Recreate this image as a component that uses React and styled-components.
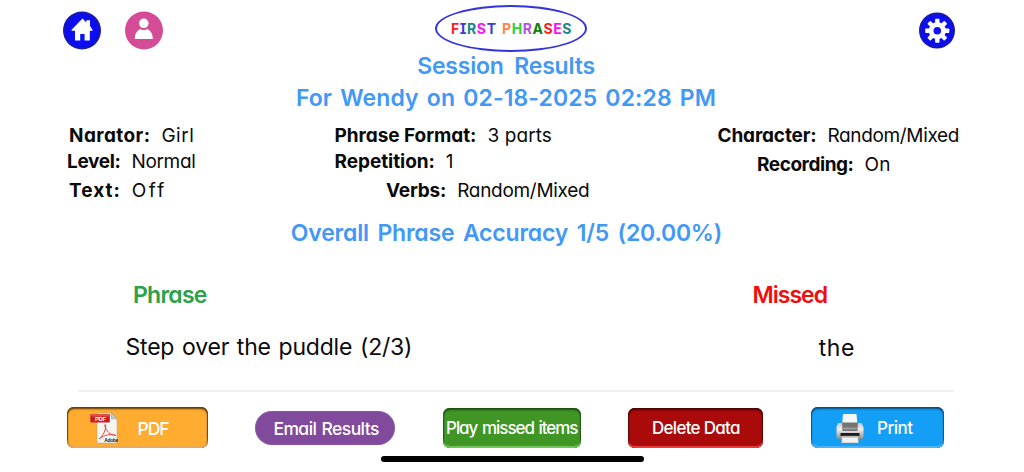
import React from 'react';
import styled, { createGlobalStyle } from 'styled-components';

const GlobalStyle = createGlobalStyle`
	* {
		box-sizing: border-box;
	}
	body {
		margin: 0;
		background: #fff;
		overflow: hidden;
	}
`;

const Page = styled.div`
	width: 1024px;
	height: 472px;
	display: flex;
	flex-direction: column;
	font-family: 'Comic Sans MS', Inter, 'Open Sans', sans-serif;
	font-feature-settings: 'cv11';
	color: #0a0a0a;
	white-space: nowrap;
`;

const Header = styled.header`
	display: grid;
	grid-template-columns: 372px 1fr 372px;
	height: 52px;
`;
const HeaderLeft = styled.div`
	display: flex;
	gap: 23px;
	padding: 11px 0 0 62.5px;
`;
const HeaderCenter = styled.div`
	display: flex;
	justify-content: center;
	padding: 4.5px 3px 0 0;
`;
const HeaderRight = styled.div`
	display: flex;
	justify-content: flex-end;
	padding: 12px 69px 0 0;
`;
const RoundButton = styled.button`
	width: ${(p) => p.$size}px;
	height: ${(p) => p.$size}px;
	padding: 0;
	border: 0;
	background: transparent;

	svg {
		display: block;
	}
`;
const Logo = styled.div`
	display: flex;
	align-items: center;
	justify-content: center;
	width: 152px;
	height: 47px;
	padding-left: 2px;
	border: 2px solid #3434dc;
	border-radius: 50%;
	font-size: 14px;
	font-weight: 700;
	letter-spacing: 0.6px;
	word-spacing: 1.5px;
	font-feature-settings: 'cv11', 'cv08';
`;
const Letter = styled.span`
	color: ${(p) => p.$color};
`;

const Title = styled.h1`
	margin: 0;
	height: ${(p) => p.$height}px;
	line-height: ${(p) => p.$line || p.$height}px;
	padding-right: ${(p) => p.$shift || 0}px;
	text-align: center;
	font-size: 23px;
	font-weight: 600;
	letter-spacing: ${(p) => p.$ls}px;
	word-spacing: ${(p) => p.$ws}px;
	color: #4298f6;
`;

const Settings = styled.section`
	display: grid;
	grid-template-columns: 267px 382px 1fr;
	height: 91px;
	padding: 7px 0 0 67px;
`;
const Column = styled.div`
	display: flex;
	flex-direction: column;
`;
const Setting = styled.div`
	display: flex;
	height: ${(p) => p.$height}px;
	line-height: ${(p) => p.$height}px;
	padding-left: ${(p) => p.$indent || 0}px;
	gap: 11px;
	font-size: 19px;
`;
const Name = styled.span`
	font-weight: 700;
	letter-spacing: ${(p) => p.$ls || 0}px;
`;
const Value = styled.span`
	letter-spacing: ${(p) => p.$ls || 0}px;
`;

const Results = styled.section`
	display: flex;
	flex-direction: column;
	height: 132px;
	margin: 0 70px 0 78px;
	border-bottom: 2px solid #efefef;
	font-size: 23px;
`;
const ResultHead = styled.div`
	display: flex;
	justify-content: space-between;
	height: 69px;
	line-height: 71px;
	padding: 0 127px 0 55px;
	font-weight: 600;
`;
const ResultRow = styled.div`
	display: flex;
	justify-content: space-between;
	height: 36px;
	line-height: 36px;
	padding: 0 99px 0 47.5px;
`;
const HeadCell = styled.span`
	color: ${(p) => p.$color};
	letter-spacing: ${(p) => p.$ls}px;
`;
const Cell = styled.span`
	letter-spacing: ${(p) => p.$ls}px;
	word-spacing: 1.5px;
	padding-top: ${(p) => p.$drop || 0}px;
`;

const Actions = styled.footer`
	display: flex;
	justify-content: space-between;
	align-items: center;
	height: 64px;
	padding: 7px 80px 0 66.5px;
`;
const Action = styled.button`
	display: flex;
	align-items: center;
	justify-content: ${(p) => (p.$icon ? 'flex-start' : 'center')};
	gap: ${(p) => p.$gap || 0}px;
	width: ${(p) => p.$width}px;
	height: ${(p) => p.$height || 40}px;
	margin: 0;
	padding: 1px 0 0 ${(p) => p.$pad || 0}px;
	border: 0;
	border-radius: ${(p) => p.$radius || 7}px;
	background: ${(p) => p.$color};
	box-shadow: ${(p) => (p.$flat ? 'inset 0 0 2px #a274b8' : `inset 0 -2px 1px ${p.$light}, inset 0 2px 2px ${p.$dark}, inset 1px 0 1px ${p.$dark}, inset -1px 0 1px ${p.$dark}`)};
	color: #fff;
	font-family: inherit;
	font-feature-settings: inherit;
	font-size: ${(p) => p.$font || 17.5}px;
	font-weight: 500;
	letter-spacing: ${(p) => p.$ls}px;
	word-spacing: ${(p) => p.$ws || 0}px;
	white-space: nowrap;
`;
const HomeBar = styled.div`
	width: 263px;
	height: 6px;
	margin: 0 0 0 381px;
	border-radius: 3px;
	background: #000;
`;

const letters = [
	['F', '#fb1c1c'], ['I', '#3c3cd8'], ['R', '#1b8585'], ['S', '#fb10fb'], ['T', '#3c3cd8'], [' ', '#fff'],
	['P', '#ff8350'], ['H', '#2fd02f'], ['R', '#b455de'], ['A', '#0b800b'], ['S', '#fb1c1c'], ['E', '#fb10fb'], ['S', '#1b8585'],
];

const BlueDisc = ({ id }) => (
	<>
		<defs>
			<radialGradient id={id}>
				<stop offset="0" stopColor="#1212ff" />
				<stop offset="0.82" stopColor="#0c0cf0" />
				<stop offset="1" stopColor="#1a1aa0" />
			</radialGradient>
		</defs>
		<circle cx="19" cy="19" r="19" fill={`url(#${id})`} />
	</>
);

const HomeIcon = () => (
	<svg width="38" height="39" viewBox="0 0 38 38">
		<BlueDisc id="home" />
		<path
			d="M19.5 7 L23.4 11 V8.8 H27 V14.4 L29.6 18.4 Q29.8 19.3 29 19.3 H26.8 V29 H21.6 V22.5 H17.2 V29 H12 V19.3 H9 Q8.2 19.3 8.6 18.3 Z"
			fill="#fff"
		/>
	</svg>
);

const UserIcon = () => (
	<svg width="38" height="39" viewBox="0 0 38 38">
		<circle cx="19" cy="19" r="19" fill="#d44c98" />
		<circle cx="18.8" cy="11.8" r="4.8" fill="#fff" />
		<path d="M9.8 27.4 C9.8 21.5 12.6 18.6 15.4 17.4 Q18.8 19.8 22.2 17.4 C25 18.6 27.8 21.5 27.8 27.4 Z" fill="#fff" />
	</svg>
);

const GearIcon = () => (
	<svg width="36" height="37" viewBox="0 0 38 38">
		<BlueDisc id="gear" />
		<g fill="#fff">
			{[0, 45, 90, 135, 180, 225, 270, 315].map((a) => (
				<rect key={a} x="17" y="6.6" width="4.6" height="6" rx="0.8" transform={`rotate(${a} 19.3 19.3)`} />
			))}
		</g>
		<circle cx="19.3" cy="19.3" r="6.5" fill="none" stroke="#fff" strokeWidth="5" />
	</svg>
);

const PdfIcon = () => (
	<svg width="28" height="32" viewBox="0 0 28 32">
		<path d="M7 1 H21.5 L27 6.5 V31 H7 Z" fill="#f7f5f2" stroke="#b9a78c" strokeWidth="0.6" />
		<path d="M21.5 1 V6.8 H27 Z" fill="#c9c9c9" stroke="#8c8c8c" strokeWidth="0.5" />
		<path
			d="M9 27 C13 24 16 18 15.8 13.5 C15.4 11.5 14.4 12.5 15 14.6 C16.5 19 20 23 25.8 23.4 C21 21.4 14 23 9 27"
			fill="none"
			stroke="#e14a44"
			strokeWidth="1"
		/>
		<rect x="0.3" y="2" width="19.5" height="8.4" rx="0.8" fill="#cc1c1c" />
		<rect x="0.3" y="2" width="19.5" height="2.6" rx="0.8" fill="#e05045" />
		<text x="5" y="8.6" fontSize="5.8" fontWeight="700" letterSpacing="-0.3" fill="#fff" fontFamily="Liberation Sans">PDF</text>
		<text x="14.2" y="29.6" fontSize="5" fontWeight="700" letterSpacing="-0.3" fill="#222" fontFamily="Liberation Sans">Adobe</text>
	</svg>
);

const PrinterIcon = () => (
	<svg width="28" height="31" viewBox="0 0 28 31">
		<defs>
			<linearGradient id="body" x1="0" y1="0" x2="0" y2="1">
				<stop offset="0" stopColor="#c8c8c8" />
				<stop offset="0.4" stopColor="#efefef" />
				<stop offset="1" stopColor="#8c8c8c" />
			</linearGradient>
		</defs>
		<path d="M2 10 H25.5 L27.5 14 V24 Q27.5 26 25.5 26 H2.5 Q0.5 26 0.5 24 V14 Z" fill="url(#body)" />
		<path d="M6 9 H22 L21.5 18 H6.5 Z" fill="#747474" />
		<path d="M7 1 H20.5 L21.3 9.5 H6.3 Z" fill="#f4f7f8" />
		<rect x="6" y="14.5" width="16" height="2" fill="#9b9b9b" />
		<rect x="4.5" y="20" width="19" height="3" rx="0.5" fill="#1b1b1b" />
		<path d="M6 23 H22 L22.6 30 H5.4 Z" fill="#f2f2f2" stroke="#7e8c96" strokeWidth="0.5" />
		<rect x="6.5" y="23" width="15" height="1.6" fill="#b7b7b7" />
	</svg>
);

export default function App() {
	return (
		<Page>
			<GlobalStyle />
			<Header>
				<HeaderLeft>
					<RoundButton $size={39} aria-label="Home"><HomeIcon /></RoundButton>
					<RoundButton $size={39} aria-label="User"><UserIcon /></RoundButton>
				</HeaderLeft>
				<HeaderCenter>
					<Logo>
						<div>
							{letters.map(([char, color], i) => (
								<Letter key={i} $color={color}>{char}</Letter>
							))}
						</div>
					</Logo>
				</HeaderCenter>
				<HeaderRight>
					<RoundButton $size={36} aria-label="Settings"><GearIcon /></RoundButton>
				</HeaderRight>
			</Header>

			<Title $height={28} $ls={-0.2} $ws={5} $shift={12}>Session Results</Title>
			<Title $height={35} $line={37} $ls={0.1} $ws={2.2} $shift={12}>For Wendy on 02-18-2025 02:28 PM</Title>

			<Settings>
				<Column>
					<Setting $height={27} $indent={2}><Name $ls={0.4}>Narator:</Name><Value $ls={0.5}>Girl</Value></Setting>
					<Setting $height={26}><Name $ls={-0.35}>Level:</Name><Value $ls={-0.35}>Normal</Value></Setting>
					<Setting $height={32} $indent={2}><Name $ls={1}>Text:</Name><Value $ls={2.4}>Off</Value></Setting>
				</Column>
				<Column>
					<Setting $height={27} $indent={0.5}><Name $ls={-0.05}>Phrase Format:</Name><Value $ls={0.1}>3 parts</Value></Setting>
					<Setting $height={26} $indent={0.5}><Name $ls={-0.05}>Repetition:</Name><Value>1</Value></Setting>
					<Setting $height={32} $indent={52}><Name $ls={-0.2}>Verbs:</Name><Value $ls={-0.3}>Random/Mixed</Value></Setting>
				</Column>
				<Column>
					<Setting $height={27} $indent={1.5}><Name $ls={-0.15}>Character:</Name><Value $ls={-0.35}>Random/Mixed</Value></Setting>
					<Setting $height={32} $indent={41}><Name $ls={-0.45}>Recording:</Name><Value $ls={0.3}>On</Value></Setting>
				</Column>
			</Settings>

			<Title as="h2" $height={54} $line={55} $ls={-0.2} $ws={3} $shift={11}>Overall Phrase Accuracy 1/5 (20.00%)</Title>

			<Results>
				<ResultHead>
					<HeadCell $color="#2ba24a" $ls={-0.75}>Phrase</HeadCell>
					<HeadCell $color="#f20d0d" $ls={-1}>Missed</HeadCell>
				</ResultHead>
				<ResultRow>
					<Cell $ls={-0.2}>Step over the puddle (2/3)</Cell>
					<Cell $ls={0.6} $drop={1}>the</Cell>
				</ResultRow>
			</Results>

			<Actions>
				<Action $icon $width={141} $height={41} $pad={23} $gap={20} $ls={-1} $color="#ffac30" $dark="#5c3a08" $light="#e8a95a">
					<PdfIcon />PDF
				</Action>
				<Action $flat $width={140} $height={34} $radius={17} $pad={2} $ls={-0.55} $ws={1} $color="#814a9c">Email Results</Action>
				<Action $width={138} $font={17} $ls={-1.05} $ws={1.2} $color="#3f9625" $dark="#1d4d10" $light="#72c95c">Play missed items</Action>
				<Action $width={135} $font={17} $ls={-0.7} $color="#ab0a0a" $dark="#4a0303" $light="#f03c3c">Delete Data</Action>
				<Action $icon $width={133} $height={41} $pad={24.5} $gap={13.5} $font={17} $ls={-0.5} $color="#149ff6" $dark="#0a4c78" $light="#4fb4f2">
					<PrinterIcon />Print
				</Action>
			</Actions>
			<HomeBar />
		</Page>
	);
}
